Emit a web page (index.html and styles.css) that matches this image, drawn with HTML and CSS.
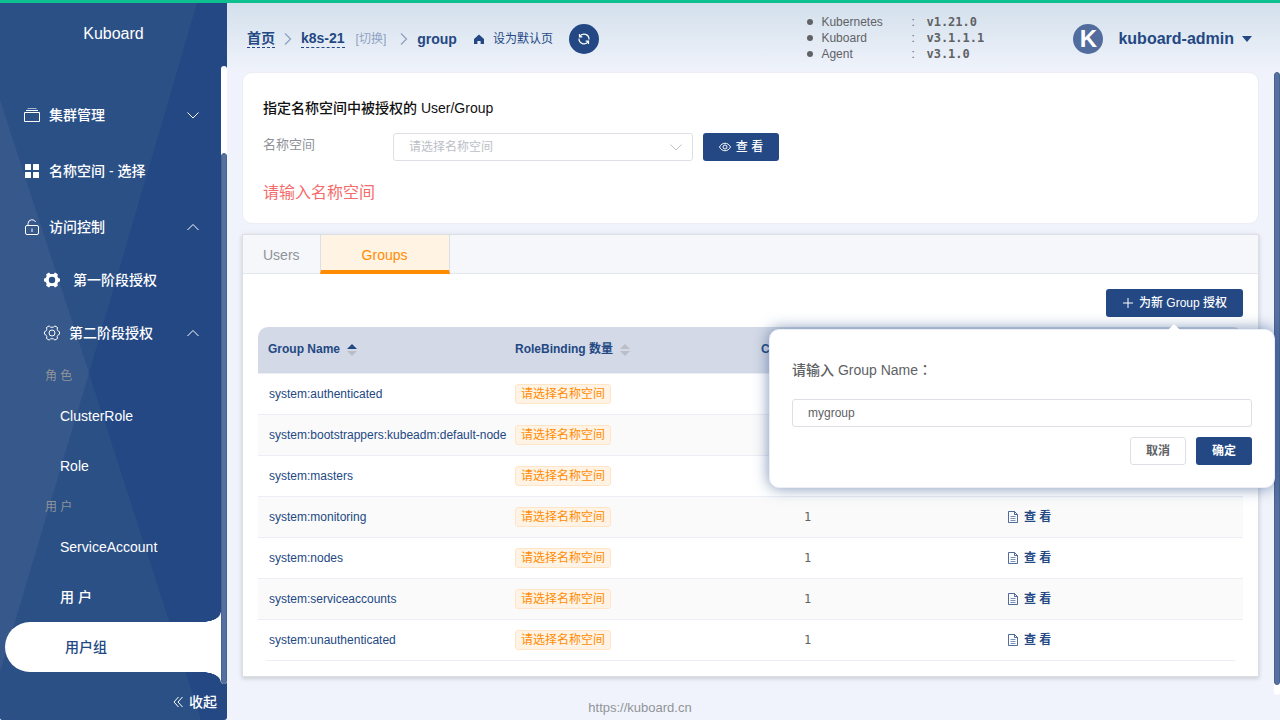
FILE: index.html
```html
<!DOCTYPE html>
<html lang="zh-CN">
<head>
<meta charset="utf-8">
<title>Kuboard</title>
<link rel="stylesheet" href="styles.css">
</head>
<body>
<svg class="sprite" aria-hidden="true">
  <symbol id="chev-down" viewBox="0 0 14 14"><path d="M1.5 4.5 7 10l5.500-5.500" fill="none" stroke="currentColor"/></symbol>
  <symbol id="chev-up" viewBox="0 0 14 14"><path d="M1.500 10 7 4.500 12.500 10" fill="none" stroke="currentColor"/></symbol>
  <symbol id="chev-right" viewBox="0 0 8 14"><path d="M1 1.500 6.500 7 1 12.500" fill="none" stroke="currentColor" stroke-width="1.300"/></symbol>
  <symbol id="doc" viewBox="0 0 12 12"><path d="M1.500.500h6l3 3v8h-9zM7.500.500v3h3" fill="none" stroke="currentColor" stroke-width=".800"/><path d="M3.500 5.500h5M3.500 7.500h5M3.500 9.500h5" stroke="currentColor" stroke-width=".600"/></symbol>
  <symbol id="sort" viewBox="0 0 10 14"><path class="up" d="M0 6 5 1l5 5z"/><path class="down" d="M0 8l5 5 5-5z"/></symbol>
</svg>
<div class="topbar"></div>
<div class="app">
  <aside class="sidebar">
    <svg class="sidebar-bg" viewBox="0 0 227 717" preserveAspectRatio="none" aria-hidden="true">
      <path d="M0 0H197L89 370 201 717H0z" fill="#2b5086"/>
      <path d="M0 97 89 370 0 669z" fill="#37588b"/>
    </svg>
    <div class="brand">Kuboard</div>
    <div class="menu-wrap">
      <nav class="menu">
        <a class="item" href="#"><svg class="icon" viewBox="0 0 16 16" fill="none" stroke="#fff"><path d="M.500 5.500h15v9H.500zM2 3.500h12" /><path d="M3.500 1.500h9" opacity=".6"/></svg><span>集群管理</span><svg class="arrow"><use href="#chev-down"/></svg></a>
        <a class="item" href="#"><svg class="icon" viewBox="0 0 16 16" fill="#fff"><rect x="1" y="1" width="6" height="6" rx=".500"/><rect x="9" y="1" width="6" height="6" rx=".500"/><rect x="1" y="9" width="6" height="6" rx=".500"/><rect x="9" y="9" width="6" height="6" rx=".500"/></svg><span>名称空间 - 选择</span></a>
        <a class="item" href="#"><svg class="icon" viewBox="0 0 16 16" fill="none" stroke="#fff"><rect x="1.500" y="6.500" width="13" height="9" rx="1.500"/><path d="M4 6.500V4.500a4 4 0 0 1 7.600-1.500M8 9.500v3.500"/></svg><span>访问控制</span><svg class="arrow"><use href="#chev-up"/></svg></a>
        <a class="item sub first" href="#"><svg class="icon" viewBox="0 0 16 16"><path d="M5 .600 6.300 2h3.400L11 .600l2.800 1.700-.4 2.200 1.100 1.700 1.500.4v2.800l-1.500.4-1.100 1.700.4 2.200L11 15.400 9.700 14H6.300L5 15.400l-2.800-1.700.4-2.200-1.100-1.700L0 9.400V6.600l1.500-.4 1.100-1.700-.4-2.200z" fill="#fff"/><circle cx="8" cy="8" r="3.200" fill="#2b5086"/></svg><span>第一阶段授权</span></a>
        <a class="item sub" href="#"><svg class="icon" viewBox="0 0 16 16" fill="none" stroke="#fff"><path d="M5.200.900 6.500 2.200h3L10.800.900l2.800 1.600-.5 1.900 1.300 2 1.100.4v2.400l-1.100.4-1.300 2 .5 1.900-2.800 1.600-1.300-1.300h-3l-1.300 1.300-2.800-1.600.5-1.900-1.300-2L.500 9.200V6.800l1.100-.4 1.300-2-.5-1.900z" stroke-linejoin="round"/><circle cx="8" cy="8" r="3"/></svg><span>第二阶段授权</span><svg class="arrow"><use href="#chev-up"/></svg></a>
        <div class="group">
          <div class="group-title">角 色</div>
          <a class="leaf" href="#">ClusterRole</a>
          <a class="leaf" href="#">Role</a>
        </div>
        <div class="group">
          <div class="group-title">用 户</div>
          <a class="leaf" href="#">ServiceAccount</a>
          <a class="leaf" href="#">用 户</a>
          <a class="leaf active" href="#">用户组</a>
        </div>
      </nav>
      <div class="scrollbar side-scroll"><div class="thumb"></div></div>
    </div>
    <button class="collapse" type="button"><svg viewBox="0 0 10 12" fill="none" stroke="#fff"><path d="M5.500 1 1 6l4.500 5M9.500 1 5 6l4.500 5"/></svg>收起</button>
  </aside>

  <main class="main">
    <header class="header">
      <nav class="crumbs">
        <a class="crumb" href="#">首页</a>
        <svg class="sep"><use href="#chev-right"/></svg>
        <a class="crumb" href="#">k8s-21</a>
        <a class="switch" href="#">[切换]</a>
        <svg class="sep"><use href="#chev-right"/></svg>
        <b class="current">group</b>
        <a class="home" href="#"><svg viewBox="0 0 12 12"><path d="M6 1.500 1 6v5h3.400V8h3.200v3H11V6z" fill="#234883"/></svg>设为默认页</a>
        <button class="refresh" type="button" aria-label="刷新"><svg viewBox="0 0 14 14" fill="none" stroke="#fff" stroke-width="1.200"><path d="M2.800 4.500A5 5 0 0 1 12 7.500M2.500 2v2.800h2.800M11.200 9.500A5 5 0 0 1 2 6.500M11.500 12V9.200H8.700"/></svg></button>
      </nav>
      <ul class="versions">
        <li><span>Kubernetes</span><i>:</i><b>v1.21.0</b></li>
        <li><span>Kuboard</span><i>:</i><b>v3.1.1.1</b></li>
        <li><span>Agent</span><i>:</i><b>v3.1.0</b></li>
      </ul>
      <button class="user" type="button"><span class="avatar">K</span>kuboard-admin<span class="caret"></span></button>
    </header>

    <div class="body">
      <div class="content">
        <section class="card query">
          <h2>指定名称空间中被授权的 User/Group</h2>
          <div class="form-row">
            <label for="ns">名称空间</label>
            <div class="select">
              <select id="ns"><option>请选择名称空间</option></select>
              <svg><use href="#chev-down"/></svg>
            </div>
            <button class="btn primary look" type="button"><svg viewBox="0 0 12 12" fill="none" stroke="currentColor"><path d="M.500 6C3 1 9 1 11.500 6 9 11 3 11 .500 6z"/><circle cx="6" cy="6" r="2"/></svg>查 看</button>
          </div>
          <p class="error">请输入名称空间</p>
        </section>

        <section class="tabs-card">
          <div class="tabs" role="tablist">
            <button class="tab" role="tab" type="button">Users</button>
            <button class="tab on" role="tab" type="button" aria-selected="true">Groups</button>
          </div>
          <div class="pane">
            <div class="toolbar">
              <div class="anchor">
                <button class="btn primary add" type="button"><svg viewBox="0 0 12 12" stroke="currentColor"><path d="M6 1v10M1 6h10"/></svg>为新 Group 授权</button>
                <form class="popover">
                  <label for="gname">请输入 Group Name<span class="colon" lang="zh-TW">：</span></label>
                  <input id="gname" type="text" value="mygroup">
                  <div class="actions">
                    <button class="btn plain" type="button">取消</button>
                    <button class="btn primary strong" type="button">确定</button>
                  </div>
                </form>
              </div>
            </div>
            <div class="table-wrap">
              <table>
                <thead><tr>
                  <th class="name">Group Name<svg class="sort asc"><use href="#sort"/></svg></th>
                  <th>RoleBinding 数量<svg class="sort"><use href="#sort"/></svg></th>
                  <th>ClusterRoleBinding 数量</th>
                  <th>操作</th>
                </tr></thead>
                <tbody>
                  <tr><td><a href="#">system:authenticated</a></td><td><span class="tag">请选择名称空间</span></td><td class="num">1</td><td><a class="view" href="#"><svg><use href="#doc"/></svg>查 看</a></td></tr>
                  <tr><td><a href="#">system:bootstrappers:kubeadm:default-node</a></td><td><span class="tag">请选择名称空间</span></td><td class="num">1</td><td><a class="view" href="#"><svg><use href="#doc"/></svg>查 看</a></td></tr>
                  <tr><td><a href="#">system:masters</a></td><td><span class="tag">请选择名称空间</span></td><td class="num">1</td><td><a class="view" href="#"><svg><use href="#doc"/></svg>查 看</a></td></tr>
                  <tr><td><a href="#">system:monitoring</a></td><td><span class="tag">请选择名称空间</span></td><td class="num">1</td><td><a class="view" href="#"><svg><use href="#doc"/></svg>查 看</a></td></tr>
                  <tr><td><a href="#">system:nodes</a></td><td><span class="tag">请选择名称空间</span></td><td class="num">1</td><td><a class="view" href="#"><svg><use href="#doc"/></svg>查 看</a></td></tr>
                  <tr><td><a href="#">system:serviceaccounts</a></td><td><span class="tag">请选择名称空间</span></td><td class="num">1</td><td><a class="view" href="#"><svg><use href="#doc"/></svg>查 看</a></td></tr>
                  <tr><td><a href="#">system:unauthenticated</a></td><td><span class="tag">请选择名称空间</span></td><td class="num">1</td><td><a class="view" href="#"><svg><use href="#doc"/></svg>查 看</a></td></tr>
                </tbody>
              </table>
            </div>
          </div>
        </section>
      </div>
      <div class="scrollbar main-scroll"><div class="thumb"></div></div>
    </div>
    <footer class="footer"><a href="#">https://kuboard.cn</a></footer>
  </main>
</div>
</body>
</html>
```

FILE: styles.css
```css
* { box-sizing: border-box; }

body {
  margin: 0;
  height: 100vh;
  display: flex;
  flex-direction: column;
  overflow: hidden;
  background: #f0f3fb;
  color: #606266;
  font: 12px/20px "Liberation Sans", "Noto Sans CJK SC", sans-serif;
}

a { color: inherit; text-decoration: none; }
button, input, select { font: inherit; color: inherit; margin: 0; }
button { border: 0; background: none; padding: 0; cursor: pointer; }
svg { display: block; flex: none; }
.sprite { position: absolute; width: 0; height: 0; }

.topbar { height: 3px; flex: none; background: #0cc18f; }
.app { flex: 1; min-height: 0; display: flex; }

/* sidebar */
.sidebar {
  width: 227px;
  flex: none;
  position: relative;
  display: flex;
  flex-direction: column;
  background: #234883;
  border-radius: 0 0 3px 3px;
  overflow: hidden;
  color: #fff;
  font-size: 14px;
  font-weight: 500;
}
.sidebar-bg { position: absolute; inset: 0; width: 100%; height: 100%; }
.brand { position: relative; height: 63px; line-height: 62px; text-align: center; font-size: 16px; }
.menu-wrap { position: relative; flex: 1; min-height: 0; display: flex; }
.menu { flex: 1; padding-top: 21px; }
.item { display: flex; align-items: center; height: 56px; padding: 0 20px 0 24px; }
.item span { flex: 1; margin-left: 9px; }
.item.sub { padding-left: 44px; }
.item.first { height: 50px; }
.item.first span { margin-left: 13px; }
.icon { width: 16px; height: 16px; }
.arrow { width: 14px; height: 14px; margin-right: 1px; }
.group + .group { padding-top: 1px; }
.group-title { height: 30px; line-height: 30px; padding-left: 45px; font-size: 12px; font-weight: 400; color: #909399; }
.leaf { display: block; height: 50px; line-height: 50px; padding-left: 60px; }
.leaf.active {
  position: relative;
  margin-left: 5px;
  background: #fff;
  color: #234883;
  border-radius: 25px 0 0 25px;
}
.leaf.active::before, .leaf.active::after { content: ""; position: absolute; right: 0; width: 18px; height: 10px; }
.leaf.active::before { top: -10px; background: radial-gradient(18px 10px at 0 0, transparent 96%, #fff); }
.leaf.active::after { bottom: -10px; background: radial-gradient(18px 10px at 0 100%, transparent 96%, #fff); }

.scrollbar { width: 6px; flex: none; background: #fff; border-radius: 3px; display: flex; flex-direction: column; }
.thumb { background: #56719f; border: 1px solid #47638f; border-radius: 3px; }
.side-scroll { justify-content: flex-end; }
.side-scroll .thumb { height: 86%; }
.main-scroll .thumb { height: calc(100% - 10px); }

.collapse {
  position: relative;
  height: 36px;
  display: flex;
  align-items: center;
  justify-content: flex-end;
  gap: 6px;
  padding-right: 10px;
  font-weight: 500;
}
.collapse svg { width: 10px; height: 12px; }

/* header */
.main { flex: 1; min-width: 0; display: flex; flex-direction: column; }
.header {
  height: 69px;
  flex: none;
  display: flex;
  align-items: center;
  padding: 2px 28px 0 20px;
  background: linear-gradient(#d3e0ec, #f0f3fb);
  color: #234883;
}
.crumbs { flex: 1; display: flex; align-items: center; font-size: 14px; }
.crumb { font-weight: 600; line-height: 17px; border-bottom: 1px dashed #234883; }
.sep { width: 8px; height: 14px; margin: 0 9px; color: #8fa2c3; }
.switch { margin: 0 5px 0 11px; font-size: 12px; color: #8fa2c3; }
.home { display: flex; align-items: center; gap: 8px; margin: 0 16px; font-size: 12px; }
.home svg { width: 12px; height: 12px; }
.refresh { width: 30px; height: 30px; border-radius: 15px; background: #234883; display: flex; align-items: center; justify-content: center; }
.refresh svg { width: 14px; height: 14px; }
.versions { list-style: none; margin: 0; padding: 0 0 2px; width: 266px; color: #606266; line-height: 16px; }
.versions li { display: flex; align-items: center; }
.versions li::before { content: ""; width: 6px; height: 6px; margin-right: 8px; border-radius: 3px; background: #606266; }
.versions span { width: 90px; }
.versions i { width: 15px; font-style: normal; }
.versions b { font-family: "DejaVu Sans Mono", monospace; font-size: 12px; }
.user { display: flex; align-items: center; font-size: 16px; font-weight: 700; }
.avatar { width: 30px; height: 30px; margin-right: 15px; border-radius: 15px; background: #526d9d; color: #fff; font-size: 24px; line-height: 30px; }
.caret { margin-left: 8px; border: 5px solid transparent; border-top: 6px solid #234883; border-bottom: 0; }

/* content */
.body { flex: 1; min-height: 0; display: flex; }
.content { flex: 1; min-width: 0; display: flex; flex-direction: column; gap: 10px; padding: 0 15px; }
.card { background: #fff; border: 1px solid #ebeef5; border-radius: 10px; }
.query { padding: 25px 20px 18px; }
.query h2 { margin: 0 0 15px; font-size: 14px; font-weight: 500; color: #111; }
.form-row { display: flex; }
.form-row label { width: 130px; font-size: 13px; line-height: 24px; color: #909399; }
.select { position: relative; width: 300px; height: 28px; margin-right: 10px; }
.select select { appearance: none; width: 100%; height: 28px; padding: 0 30px 0 15px; border: 1px solid #dcdfe6; border-radius: 3px; background: #fff; color: #bbbec6; }
.select svg { position: absolute; right: 10px; top: 7px; width: 14px; height: 14px; color: #c0c4cc; }
.error { margin: 20px 0 0; font-size: 16px; line-height: 24px; color: #f56c6c; }

.btn { height: 28px; padding: 0 15px; border-radius: 3px; display: flex; align-items: center; justify-content: center; gap: 5px; font-weight: 500; }
.btn svg { width: 12px; height: 12px; }
.primary { background: #234883; color: #fff; }
.look { min-width: 76px; }
.add { min-width: 137px; }
.plain { border: 1px solid #dcdfe6; background: #fff; }
.plain, .strong { width: 56px; font-weight: 700; }

.tabs-card { background: #fff; border: 1px solid #dcdfe6; box-shadow: 0 2px 4px rgba(0, 0, 0, .12), 0 0 6px rgba(0, 0, 0, .06); }
.tabs { height: 39px; display: flex; background: #f5f7fa; border-bottom: 1px solid #e4e7ed; }
.tab { height: 39px; padding: 0 20px; font-size: 14px; font-weight: 500; color: #909399; }
.tab.on { min-width: 130px; padding: 4px 40px 0; background: #fff3e4; color: #ff8c00; border: solid #dcdfe6; border-width: 0 1px; border-bottom: 4px solid #ff8c00; }
.pane { padding: 15px; }
.toolbar { display: flex; justify-content: flex-end; margin-bottom: 10px; }
.anchor { position: relative; }
.popover {
  position: absolute;
  z-index: 2;
  top: 40px;
  right: -32px;
  width: 506px;
  padding: 29px 22px 22px;
  background: #fff;
  border: 1px solid #ebeef5;
  border-radius: 10px;
  box-shadow: 0 0 15px rgba(35, 72, 131, .6);
}
.popover::before {
  content: "";
  position: absolute;
  top: -6px;
  right: 94px;
  border: 6px solid transparent;
  border-top: 0;
  border-bottom-color: #fff;
}
.popover label { display: block; margin-bottom: 18px; font-size: 14px; line-height: 22px; font-weight: 500; }
.colon { font-family: "Noto Sans CJK TC", sans-serif; line-height: 1; }
.popover input { display: block; width: 100%; height: 28px; padding: 0 15px; border: 1px solid #dcdfe6; border-radius: 3px; background: #fff; }
.actions { display: flex; justify-content: flex-end; gap: 10px; margin-top: 10px; }

.table-wrap { border-radius: 10px; overflow: hidden; }
table { width: 100%; table-layout: fixed; border-collapse: separate; border-spacing: 0; color: #234883; }
th, td { text-align: left; white-space: nowrap; border-bottom: 1px solid #ebeef5; }
th { height: 47px; padding: 0 0 2px 10px; background: #d3d9e6; font-weight: 600; }
th.name { width: 247px; }
td { height: 41px; padding: 0 0 0 10px; }
td:first-child { padding-left: 11px; }
tbody tr:nth-child(even) td { background: #fafafa; }
.sort { display: inline-block; vertical-align: middle; width: 10px; height: 14px; margin-left: 7px; }
.sort.asc { --up: #234883; }
.up { fill: var(--up, #bbbec6); }
.down { fill: #bbbec6; }
.tag { display: inline-block; height: 20px; padding: 0 5px; border: 1px solid #ffe5c6; border-radius: 3px; background: #fff3e6; color: #ff8c00; line-height: 18px; vertical-align: middle; }
.num { padding-left: 53px; color: #606266; font-family: "DejaVu Sans Mono", monospace; }
.view { display: flex; align-items: center; gap: 5px; font-weight: 600; }
.view svg { width: 12px; height: 12px; }

.footer { height: 25px; line-height: 25px; flex: none; padding-right: 227px; text-align: center; font-size: 13px; color: #909399; }
```
